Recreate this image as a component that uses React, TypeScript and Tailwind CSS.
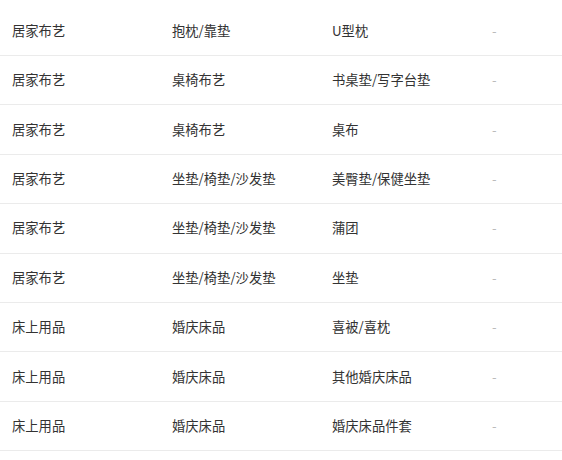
const rows = [
  ["居家布艺", "抱枕/靠垫", "U型枕", "-"],
  ["居家布艺", "桌椅布艺", "书桌垫/写字台垫", "-"],
  ["居家布艺", "桌椅布艺", "桌布", "-"],
  ["居家布艺", "坐垫/椅垫/沙发垫", "美臀垫/保健坐垫", "-"],
  ["居家布艺", "坐垫/椅垫/沙发垫", "蒲团", "-"],
  ["居家布艺", "坐垫/椅垫/沙发垫", "坐垫", "-"],
  ["床上用品", "婚庆床品", "喜被/喜枕", "-"],
  ["床上用品", "婚庆床品", "其他婚庆床品", "-"],
  ["床上用品", "婚庆床品", "婚庆床品件套", "-"],
];

export default function App() {
  return (
    <div
      className="w-[562px] h-[460px] overflow-hidden bg-white pt-[6.6px]"
      style={{ fontFamily: '"Noto Sans CJK SC", "Noto Sans", sans-serif' }}
    >
      <div className="w-[640px]">
        {rows.map((row, i) => (
          <div
            key={i}
            className="grid grid-cols-[160px_160px_160px_160px] h-[49.4px] items-center border-b border-[#ebebeb] text-[13.3px] text-[#333]"
          >
            {row.map((cell, j) => (
              <div key={j} className={j === 3 ? "px-3 text-[#bbb]" : "px-3"}>
                {cell}
              </div>
            ))}
          </div>
        ))}
      </div>
    </div>
  );
}
